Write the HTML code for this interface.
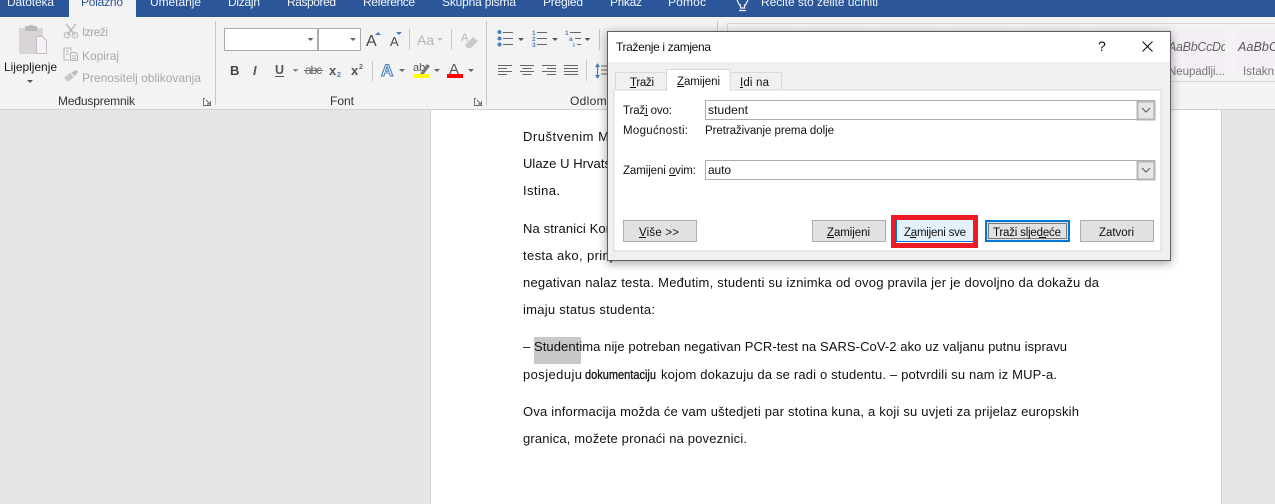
<!DOCTYPE html>
<html><head><meta charset="utf-8"><style>
html,body{margin:0;padding:0;width:1275px;height:504px;overflow:hidden;background:#e6e6e6}
svg{display:block;font-family:"Liberation Sans",sans-serif}
.b{font-size:13px;fill:#111}
.r{font-size:12px;fill:#333}
.g{font-size:12px;fill:#a8a8a8}
.t{font-size:12px;fill:#f0f4fa}
.d{font-size:11.5px;fill:#111}
</style></head><body>
<svg width="1275" height="504" viewBox="0 0 1275 504" xmlns="http://www.w3.org/2000/svg">
<defs>
<filter id="sh" x="-10%" y="-15%" width="120%" height="130%"><feGaussianBlur stdDeviation="5"/></filter>
<path id="c" d="M0 0h6l-3 3z"/>
</defs>
<!-- background -->
<rect width="1275" height="504" fill="#e6e6e6"/>
<rect x="430" y="110" width="791" height="394" fill="#fff"/>
<rect x="430" y="110" width="1" height="394" fill="#d4d4d4"/>
<rect x="1221" y="110" width="1" height="394" fill="#d4d4d4"/>
<!-- title -->
<rect width="1275" height="17" fill="#2b579a"/>
<rect x="69" y="0" width="67" height="17" fill="#f3f3f3"/>
<g class="t">
<text x="7" y="6" textLength="47">Datoteka</text>
<text x="81" y="6" textLength="42" style="fill:#2b579a">Polazno</text>
<text x="150" y="6" textLength="51">Umetanje</text>
<text x="228" y="6" textLength="32">Dizajn</text>
<text x="287" y="6" textLength="49">Raspored</text>
<text x="363" y="6" textLength="52">Reference</text>
<text x="442" y="6" textLength="74">Skupna pisma</text>
<text x="543" y="6" textLength="40">Pregled</text>
<text x="610" y="6" textLength="32">Prikaz</text>
<text x="668" y="6" textLength="38">Pomoć</text>
<text x="761" y="6" textLength="117">Recite što želite učiniti</text>
</g>
<path d="M737 0l2.500 5h1v3h4v-3h1l2.500-5M739 10.500h7" fill="none" stroke="#f0f4fa" stroke-width="1.200"/>
<!-- ribbon -->
<rect y="17" width="1275" height="92" fill="#f3f3f3"/>
<rect y="109" width="1275" height="1" fill="#d2d2d2"/>
<g fill="#c6c6c6">
<rect x="215" y="21" width="1" height="84"/>
<rect x="486" y="21" width="1" height="84"/>
<rect x="717" y="21" width="1" height="84"/>
</g>
<!-- clipboard -->
<rect x="19" y="28" width="24" height="26" rx="1" fill="#d9d4d7"/>
<rect x="25" y="26" width="12" height="5" fill="#bdb9bb"/><rect x="29" y="25" width="4" height="3" fill="#bdb9bb"/>
<path d="M36.500 36.500h6l4 4v13h-10z" fill="#f6f1f6" stroke="#c4c0c3"/>
<text x="4" y="71" class="r" style="fill:#1e1e1e" textLength="53">Lijepljenje</text>
<use href="#c" x="27" y="80" fill="#555"/>
<!-- cut -->
<path d="M66 24l9 11M76 24l-9 11" stroke="#bdbdbd" stroke-width="1.600" fill="none"/>
<circle cx="67" cy="35" r="2.800" fill="none" stroke="#bdbdbd" stroke-width="1.200"/><circle cx="75" cy="35" r="2.800" fill="none" stroke="#bdbdbd" stroke-width="1.200"/>
<text x="82" y="36" class="g" textLength="26">Izreži</text>
<!-- copy -->
<path d="M64 48h7v3M64 48v12h5M70.500 52.500h5l2 2v6h-7z M66 51h3M66 54h3M72 56h4M72 58.500h4" fill="none" stroke="#b5b5b5"/>
<text x="82" y="60" class="g" textLength="37">Kopiraj</text>
<!-- painter -->
<path d="M64 78l6-5 4 4-6 5z" fill="#c9c9c9"/><path d="M71 73l5-3 2 2-3 4z" fill="#bcbcbc"/>
<text x="82" y="82" class="g" textLength="119">Prenositelj oblikovanja</text>
<text x="58" y="105" class="r" textLength="77">Međuspremnik</text>
<path d="M205 98.500h-1.500v7h7v-2M206 100l4 4M207 104h3.500v-3" fill="none" stroke="#666" stroke-width=".9"/>
<text x="330" y="105" class="r" textLength="24">Font</text>
<path d="M476 98.500h-1.500v7h7v-2M477 100l4 4M478 104h3.500v-3" fill="none" stroke="#666" stroke-width=".9"/>
<text x="570" y="105" class="r" textLength="50">Odlomak</text>
<!-- font boxes -->
<rect x="224.500" y="28.500" width="93" height="22" fill="#fff" stroke="#ababab"/>
<rect x="318.500" y="28.500" width="42" height="22" fill="#fff" stroke="#ababab"/>
<use href="#c" x="307.500" y="38" fill="#666"/><use href="#c" x="350" y="38" fill="#666"/>
<text x="366" y="46" font-size="16" fill="#444">A</text><path d="M375 35l3-3 3 3z" fill="#4a7ebb"/>
<text x="390" y="46" font-size="13" fill="#444">A</text><path d="M396 32h6l-3 3z" fill="#4a7ebb"/>
<rect x="409" y="29" width="1" height="21" fill="#c6c6c6"/>
<text x="417" y="45" font-size="14" fill="#b5b5b5">Aa</text><use href="#c" x="437" y="38" fill="#c0c0c0"/>
<rect x="451" y="29" width="1" height="21" fill="#c6c6c6"/>
<text x="461" y="41" font-size="11" fill="#b5b5b5">A</text><path d="M465 45l8-8 5 4-7 7h-4z" fill="#c9c9c9"/>
<!-- font row 2 -->
<text x="230" y="75" font-size="13" font-weight="bold" fill="#444">B</text>
<text x="253" y="75" font-size="13" font-style="italic" font-weight="bold" fill="#555">I</text>
<text x="275" y="74" font-size="12.500" font-weight="bold" fill="#555">U</text><rect x="275" y="76" width="9" height="1" fill="#555"/>
<use href="#c" x="292.500" y="69" fill="#888"/>
<text x="305" y="74" font-size="12" fill="#666" textLength="17">abc</text><rect x="304" y="70" width="19" height="1" fill="#666"/>
<text x="329" y="75" font-size="13" font-weight="bold" fill="#555">x</text><text x="337" y="77" font-size="7" font-weight="bold" fill="#4a7ebb">2</text>
<text x="351" y="75" font-size="13" font-weight="bold" fill="#555">x</text><text x="359" y="69" font-size="7" font-weight="bold" fill="#666">2</text>
<rect x="372" y="61" width="1" height="20" fill="#c6c6c6"/>
<text x="381" y="76" font-size="17" fill="#fff" stroke="#4a7ebb" stroke-width="1.100" font-weight="bold">A</text>
<use href="#c" x="399" y="69" fill="#666"/>
<text x="413" y="71" font-size="11" fill="#555">ab</text><path d="M420 74l7-10 3 2-7 9z" fill="#777"/><rect x="413" y="74" width="16" height="4" fill="#ffff00"/>
<use href="#c" x="434" y="69" fill="#666"/>
<text x="449" y="74" font-size="15" fill="#555">A</text><rect x="447" y="74" width="16" height="4" fill="#ff0000"/>
<use href="#c" x="468" y="69" fill="#666"/>
<!-- lists -->
<g fill="#4a7ebb">
<circle cx="499.500" cy="32" r="2"/><circle cx="499.500" cy="38.500" r="2"/><circle cx="499.500" cy="44.500" r="2"/>
<text x="532" y="35" font-size="6.500" font-weight="bold">1</text><text x="532" y="41" font-size="6.500" font-weight="bold">2</text><text x="532" y="47" font-size="6.500" font-weight="bold">3</text>
<text x="565" y="35" font-size="6.500" font-weight="bold">1</text><text x="569" y="41" font-size="6.500" font-weight="bold">a</text><text x="573" y="47" font-size="6.500" font-weight="bold">i</text>
</g>
<path d="M503 32.500h10M503 38.500h10M503 44.500h10M537 32.500h10M537 38.500h10M537 44.500h10M570 32.500h11M575 38.500h6M577 44.500h4" stroke="#666" stroke-width="1"/>
<use href="#c" x="518" y="38" fill="#555"/><use href="#c" x="552" y="38" fill="#555"/><use href="#c" x="584.500" y="38" fill="#555"/>
<rect x="599" y="29" width="1" height="21" fill="#c6c6c6"/>
<path d="M498 65.500h14M498 68.500h9M498 71.500h14M498 74.500h9M520 65.500h14M522.500 68.500h9M520 71.500h14M522.500 74.500h9M542 65.500h14M547 68.500h9M542 71.500h14M547 74.500h9M564 65.500h14M564 68.500h14M564 71.500h14M564 74.500h14" stroke="#666" stroke-width="1" fill="none"/>
<rect x="586" y="60" width="1" height="21" fill="#c6c6c6"/>
<path d="M597.500 64v14" stroke="#4a7ebb" stroke-width="1.200"/><path d="M595 67l2.500-4 2.500 4zM595 75l2.500 4 2.500-4z" fill="#4a7ebb"/>
<path d="M601 66h7M601 70h7M601 74h7" stroke="#666"/>
<!-- gallery -->
<rect x="727.500" y="23.500" width="560" height="58" fill="#f3f3f3" stroke="#d6d6d6"/>
<g fill="#f4eff5">
<rect x="732" y="29" width="64" height="48"/><rect x="804" y="29" width="64" height="48"/><rect x="876" y="29" width="64" height="48"/>
<rect x="948" y="29" width="64" height="48"/><rect x="1020" y="29" width="64" height="48"/><rect x="1092" y="29" width="64" height="48"/>
<rect x="1164" y="29" width="61" height="48"/><rect x="1236" y="29" width="50" height="48"/>
</g>
<text x="1168" y="51" font-size="12.500" font-style="italic" fill="#666" textLength="59">AaBbCcDc</text>
<rect x="1225" y="35" width="11" height="20" fill="#f3f3f3"/>
<text x="1238" y="51" font-size="12.500" font-style="italic" fill="#555" textLength="40">AaBbC</text>
<text x="1168" y="75" font-size="11.500" fill="#777" textLength="57">Neupadlji...</text>
<text x="1243" y="75" font-size="11.500" fill="#777" textLength="31">Istakn</text>
<!-- doc text -->
<g class="b">
<text x="523" y="141" textLength="86">Društvenim M</text>
<text x="523" y="168" textLength="88">Ulaze U Hrvats</text>
<text x="523" y="195" textLength="37">Istina.</text>
<text x="523" y="233" textLength="90">Na stranici Kon</text>
<text x="523" y="260" textLength="90">testa ako, prinj</text>
<text x="523" y="287" textLength="576">negativan nalaz testa. Međutim, studenti su iznimka od ovog pravila jer je dovoljno da dokažu da</text>
<text x="523" y="314" textLength="132">imaju status studenta:</text>
<rect x="534" y="337" width="47" height="27" fill="#c8c8c8"/>
<text x="523" y="351" textLength="544">– Studentima nije potreban negativan PCR-test na SARS-CoV-2 ako uz valjanu putnu ispravu</text>
<text x="523" y="379" textLength="59">posjeduju</text>
<text x="585" y="379" textLength="71" lengthAdjust="spacingAndGlyphs" style="stroke:#111;stroke-width:.3">dokumentaciju</text>
<text x="661" y="379" textLength="396">kojom dokazuju da se radi o studentu. – potvrdili su nam iz MUP-a.</text>
<text x="523" y="416" textLength="556">Ova informacija možda će vam uštedjeti par stotina kuna, a koji su uvjeti za prijelaz europskih</text>
<text x="523" y="443" textLength="224">granica, možete pronaći na poveznici.</text>
</g>
<!-- dialog -->
<rect x="607" y="33" width="564" height="230" fill="#000" opacity=".38" filter="url(#sh)"/>
<rect x="607.500" y="31.500" width="563" height="229" fill="#f0f0f0" stroke="#5f5f5f"/>
<rect x="608" y="32" width="562" height="30" fill="#fff"/>
<text x="616" y="51" font-size="12" fill="#111" textLength="95">Traženje i zamjena</text>
<text x="1098" y="51" font-size="14" fill="#111">?</text>
<path d="M1142.500 41.500l10 10M1152.500 41.500l-10 10" stroke="#111" stroke-width="1" fill="none"/>
<!-- tabs -->
<path d="M615.500 91v-18.500h51v18.500M730.500 72.500h51v18.500" fill="#f0f0f0" stroke="#d9d9d9"/>
<rect x="614" y="90" width="547" height="161" fill="#fff" stroke="#d9d9d9"/>
<path d="M666.500 91v-21.500h63.500v21.500" fill="#fff" stroke="#d9d9d9"/>
<rect x="667" y="88" width="63" height="4" fill="#fff"/>
<g class="d">
<text x="630" y="86" textLength="24">Traži</text><rect x="630" y="87" width="6" height="1" fill="#111"/>
<text x="677" y="85" textLength="43">Zamijeni</text><rect x="677" y="86" width="7" height="1" fill="#111"/>
<text x="740" y="86" textLength="29">Idi na</text><rect x="740" y="87" width="3" height="1" fill="#111"/>
<text x="623" y="114" textLength="49">Traži ovo:</text><rect x="644" y="115" width="4" height="1" fill="#111"/>
<text x="623" y="134" textLength="65">Mogućnosti:</text>
<text x="705" y="134" textLength="129">Pretraživanje prema dolje</text>
<text x="623" y="174" textLength="73">Zamijeni ovim:</text><rect x="669" y="175" width="7" height="1" fill="#111"/>
</g>
<!-- inputs -->
<rect x="705.500" y="100.500" width="449" height="19" fill="#fff" stroke="#adadad"/>
<rect x="705.500" y="160.500" width="449" height="19" fill="#fff" stroke="#adadad"/>
<rect x="1137.500" y="101.500" width="17" height="18" fill="#e6e6e6" stroke="#b4b4b4" stroke-width="2"/>
<rect x="1137.500" y="161.500" width="17" height="18" fill="#e6e6e6" stroke="#b4b4b4" stroke-width="2"/>
<path d="M1142 108l4 4 4-4M1142 168l4 4 4-4" fill="none" stroke="#555"/>
<g font-size="12" fill="#111">
<text x="708" y="114" textLength="40">student</text>
<text x="708" y="174" textLength="23">auto</text>
</g>
<!-- buttons -->
<rect x="623.500" y="220.500" width="73" height="21" fill="#e1e1e1" stroke="#adadad"/>
<rect x="812.500" y="220.500" width="73" height="21" fill="#e1e1e1" stroke="#adadad"/>
<rect x="1080.500" y="220.500" width="73" height="21" fill="#e1e1e1" stroke="#adadad"/>
<rect x="893.500" y="217.500" width="82" height="28" fill="none" stroke="#ed1c24" stroke-width="5"/>
<rect x="896" y="220" width="77" height="22" fill="#e5f1fb"/>
<rect x="896" y="241" width="77" height="1" fill="#0078d7"/>
<rect x="896" y="220" width="1" height="22" fill="#0078d7"/>
<rect x="986" y="221" width="83" height="20" fill="#e1e1e1" stroke="#0078d7" stroke-width="2"/>
<rect x="988.500" y="223.500" width="78" height="15" fill="none" stroke="#111" stroke-dasharray="1 1"/>
<g class="d">
<text x="639" y="236" textLength="40">Više &gt;&gt;</text><rect x="639" y="237" width="7" height="1" fill="#111"/>
<text x="827" y="236" textLength="43">Zamijeni</text><rect x="827" y="237" width="7" height="1" fill="#111"/>
<text x="904" y="236" textLength="62">Zamijeni sve</text><rect x="910" y="237" width="6" height="1" fill="#111"/>
<text x="993" y="236" textLength="68">Traži sljedeće</text><rect x="1039" y="237" width="7" height="1" fill="#111"/>
<text x="1099" y="236" textLength="35">Zatvori</text>
</g>
</svg>
</body></html>
